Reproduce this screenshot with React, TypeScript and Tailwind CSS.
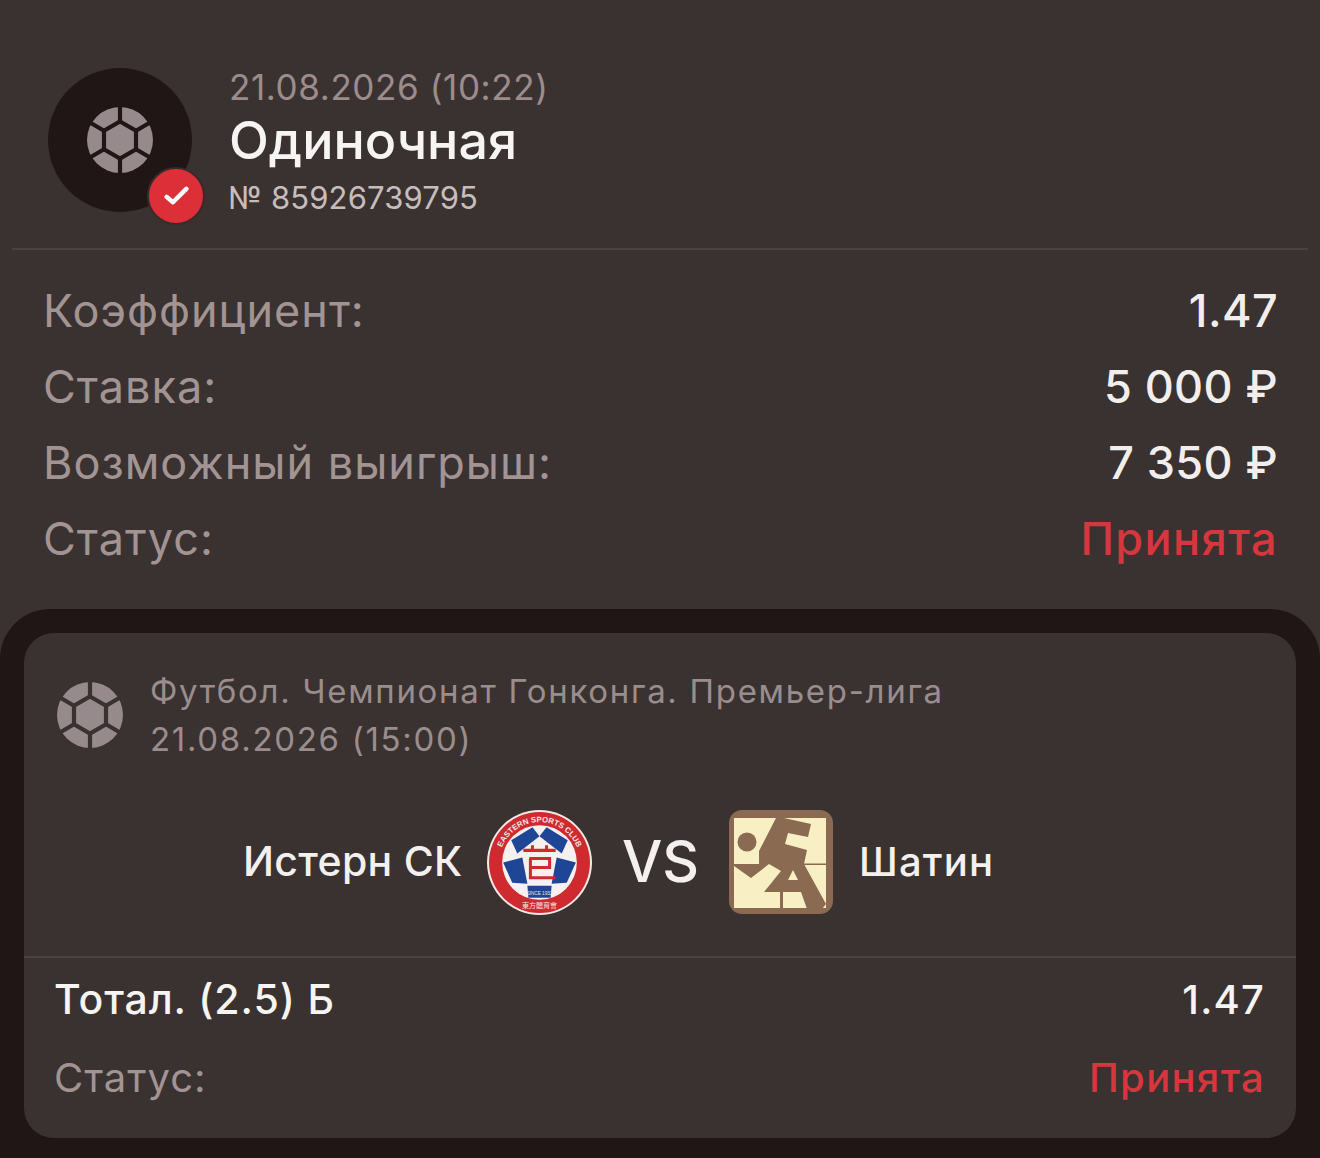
const FONT = "font-['Inter','Liberation_Sans',sans-serif]";

function Ball({ gap, className }: { gap: string; className: string }) {
  return (
    <svg viewBox="0 0 66 66" className={className}>
      <circle cx="33" cy="33" r="33" fill="#968a8c" />
      <g stroke={gap} strokeWidth="4.2" fill="none">
        <path d="M33 14.5 L49 23.7 L49 42.3 L33 51.5 L17 42.3 L17 23.7 Z" />
        <path d="M33 14.5 V-1 M49 23.7 L63 15.5 M49 42.3 L63 50.5 M33 51.5 V67 M17 42.3 L3 50.5 M17 23.7 L3 15.5" />
      </g>
    </svg>
  );
}

function EasternLogo() {
  return (
    <svg viewBox="0 0 104 104" className="h-[105px] w-[105px] shrink-0">
      <circle cx="52" cy="52" r="52" fill="#f4e9e6" />
      <circle cx="52" cy="52" r="50" fill="#cf2a30" />
      <circle cx="52" cy="52" r="37" fill="#f6f1ee" />
      <path d="M24 30 L45 17 L52 26 L30 43 Z" fill="#1f4696" />
      <path d="M80 30 L59 17 L52 26 L74 43 Z" fill="#1f4696" />
      <path d="M16 52 L35 47 L40 73 L25 72 Z" fill="#1f4696" />
      <path d="M88 52 L69 47 L64 73 L79 72 Z" fill="#1f4696" />
      <path d="M40 75 H64 L63 87 H41 Z" fill="#1f4696" />
      <g stroke="#cf2a30" strokeWidth="3" fill="none">
        <path d="M36 40 H68 M45 35 V40 M59 35 V40 M42 48 H62 V57 H43 M43 48 V67 H68" />
      </g>
      <path id="easternArc" d="M12 52 A40 40 0 0 1 92 52" fill="none" />
      <text fontSize="7.8" fontWeight="600" fill="#f6e6e2" fontFamily="'Liberation Sans',sans-serif">
        <textPath href="#easternArc" startOffset="50%" textAnchor="middle">EASTERN SPORTS CLUB</textPath>
      </text>
      <text x="52" y="84" fontSize="4.6" fill="#e8e4ea" textAnchor="middle" fontFamily="'Liberation Sans',sans-serif">SINCE 1932</text>
      <text x="52" y="97" fontSize="7" fill="#f6e6e2" textAnchor="middle" fontFamily="'Noto Sans CJK TC',sans-serif">東方體育會</text>
    </svg>
  );
}

function ShatinLogo() {
  return (
    <svg viewBox="0 0 104 104" className="h-[104px] w-[104px] shrink-0">
      <rect width="104" height="104" rx="13" fill="#8a6a50" />
      <rect x="5" y="8" width="92" height="90" fill="#f8efc4" />
      <circle cx="18" cy="32" r="9.5" fill="#8a6a50" />
      <path d="M47 8 H55 L82 14 L79 27 L59 23 L56 34 L78 40 L75 54 L97 94 L93 99 H78 L72 82 H35 L52 61 L40 54 L22 68 L5 56 V54 H30 V41 Z" fill="#8a6a50" />
      <path d="M64 60 L59 70 H69 Z" fill="#f8efc4" />
      <path d="M51 82 H54 V98 H51 Z" fill="#8a6a50" />
      <path d="M75 53.5 H97 V55 H75 Z" fill="#8a6a50" />
    </svg>
  );
}

function Row({ label, value, red }: { label: string; value: string; red?: boolean }) {
  return (
    <div className="flex h-[76px] items-center justify-between">
      <span className="text-[45px] tracking-[1px] text-[#a39494]">{label}</span>
      <span className={`text-[45px] ${red ? "font-medium tracking-[1.4px] text-[#d6373f]" : "font-[450] tracking-[0.4px] text-[#f2eeee]"}`}>{value}</span>
    </div>
  );
}

export default function App() {
  return (
    <div className={`${FONT} flex h-[1158px] w-[1320px] flex-col overflow-hidden bg-[#3a3231]`}>
      <div className="mx-3 flex h-[250px] shrink-0 items-start border-b-2 border-[#4a4140] pl-9 pt-[68px]">
        <div className="relative flex h-36 w-36 shrink-0 items-center justify-center rounded-full bg-[#1f1615]">
          <Ball gap="#1f1615" className="h-[66px] w-[66px]" />
          <div className="absolute bottom-[-13px] right-[-13px] flex h-[58px] w-[58px] items-center justify-center rounded-full border-[2px] border-[#3a2a2a] bg-[#dc2f38]">
            <svg viewBox="0 0 28 22" className="h-[20px] w-[25px]" fill="none" stroke="#fff" strokeWidth="5" strokeLinecap="round" strokeLinejoin="round">
              <path d="M3 12 L10 18 L25 3" />
            </svg>
          </div>
        </div>
        <div className="ml-[37px] flex flex-col">
          <div className="mt-[-3px] h-[43px] text-[35px] leading-[44px] tracking-[0.6px] text-[#9c8c8c]">21.08.2026 (10:22)</div>
          <div className="h-[66px] text-[52px] font-medium leading-[66px] text-[#f7f4f4]">Одиночная</div>
          <div className="mt-[1px] ml-[-1px] text-[31px] leading-[46px] tracking-[0.15px] text-[#c8bdbd]">№ 85926739795</div>
        </div>
      </div>

      <div className="flex flex-col pl-[43px] pr-[42px] pt-[23px]">
        <Row label="Коэффициент:" value="1.47" />
        <Row label="Ставка:" value="5 000 ₽" />
        <Row label="Возможный выигрыш:" value="7 350 ₽" />
        <Row label="Статус:" value="Принята" red />
      </div>

      <div className="mt-[32px] flex-1 rounded-t-[50px] bg-[#1f1615] px-6 pt-6">
        <div className="flex h-[505px] flex-col rounded-[30px] bg-[#3a3231]">
          <div className="flex items-start pl-[33px] pt-[34px]">
            <Ball gap="#3a3231" className="mt-[15px] h-[66px] w-[66px] shrink-0" />
            <div className="ml-[27px] text-[33px] leading-[48px] tracking-[1.7px] text-[#9a8d8d]">
              <div>Футбол. Чемпионат Гонконга. Премьер-лига</div>
              <div>21.08.2026 (15:00)</div>
            </div>
          </div>

          <div className="mt-[47px] flex h-[104px] items-center pl-[219px]">
            <span className="w-[244px] shrink-0 text-[41px] font-medium tracking-[0.3px] text-[#f4f0f0]">Истерн СК</span>
            <EasternLogo />
            <span className="w-[137px] shrink-0 text-center text-[57px] font-medium text-[#f4f0f0]">VS</span>
            <ShatinLogo />
            <span className="ml-[26px] text-[40px] font-medium tracking-[1.2px] text-[#f4f0f0]">Шатин</span>
          </div>

          <div className="mt-[42px] border-t-2 border-[#4a4140] pl-[30px] pr-[31px] pt-[16px]">
            <div className="flex h-[52px] items-center justify-between text-[41px] text-[#f7f4f4]">
              <span className="font-medium tracking-[0.9px]">Тотал. (2.5) Б</span>
              <span className="text-[40px] font-[450] tracking-[1.2px]">1.47</span>
            </div>
            <div className="mt-[26px] flex h-[52px] items-center justify-between text-[40px] tracking-[1px]">
              <span className="text-[#a39494]">Статус:</span>
              <span className="font-medium tracking-[1.3px] text-[#d6373f]">Принята</span>
            </div>
          </div>
        </div>
      </div>
    </div>
  );
}
